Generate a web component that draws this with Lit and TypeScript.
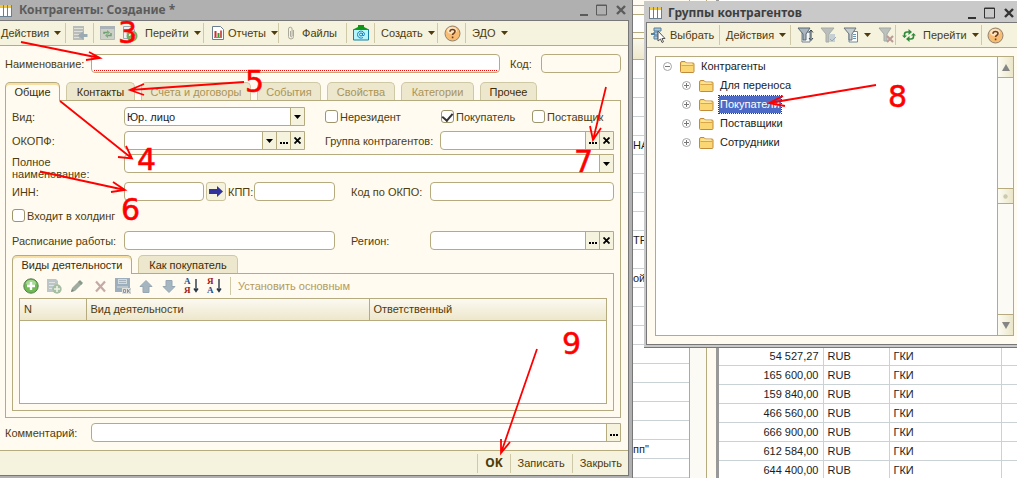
import { LitElement, html, svg, css, nothing, TemplateResult } from "lit";
import { customElement } from "lit/decorators.js";

const shared = css`
  * { box-sizing: border-box; }
  button, input, select {
    font: inherit;
    color: inherit;
    margin: 0;
    padding: 0;
    border: 0;
    background: none;
    border-radius: 0;
    outline: 0;
    appearance: none;
  }
  svg { display: block; flex: none; }
  .titlebar { display: flex; align-items: center; font: bold 12px/16px "Noto Sans", sans-serif; }
  .titlebar .caption { flex: 1; white-space: nowrap; }
  .titlebar .controls { display: flex; gap: 5px; }
  .toolbar {
    display: grid;
    height: 25px;
    background: #f5f2dd;
    border-bottom: 1px solid #b5ab7e;
    color: #4f3b0c;
    align-items: center;
  }
  .group { display: flex; align-items: center; height: 20px; position: relative; white-space: nowrap; }
  .sep { border-left: 1px solid #cfc9a8; padding-left: 6px; }
  .group button { display: flex; align-items: center; gap: 4px; height: 20px; white-space: nowrap; }
`;

const caret = html`<svg width="9" height="6" viewBox="0 0 9 6"><path d="M1 1h7l-3.500 4z" fill="#4f3b0c" /></svg>`;

const icons: Record<string, TemplateResult> = {
  grid: html`<svg width="13" height="13" viewBox="0 0 13 13"><path d="M0 1h13v11H0z" fill="#fff" /><path d="M0 1h13v3H0z" fill="#f0c63c" /><path d="M.5 1v11.500M4.500 1v11.500M8.500 1v11.500M12.500 1v11.500M0 12.500h13" stroke="#6a7f92" fill="none" /></svg>`,
  listBack: html`<svg width="16" height="16" viewBox="0 0 16 16"><path d="M1 1h11v14H1z" fill="#b9bdba" /><path d="M2 3.500h9M2 6.500h9M2 9.500h5M2 12.500h5" stroke="#dfe0d8" /><path d="M15.500 9h-4V6L6 10.500l5.500 4.500v-3h4z" fill="#9ba9b3" /></svg>`,
  refreshBox: html`<svg width="15" height="14" viewBox="0 0 15 14"><path d="M.5 .5h14v13H.5z" fill="#ccd0c5" stroke="#b4bab4" /><path d="M0 0h15v3H0z" fill="#a9b3b7" /><path d="M4 8V6.500h4M11 7v2.500H7" fill="none" stroke="#6da174" stroke-width="1.500" /><path d="M7 4l3 2.500L7 9zM8 7l-3 2.500L8 12z" fill="#7dab80" /></svg>`,
  docRefresh: html`<svg width="16" height="17" viewBox="0 0 16 17"><path d="M1.500 1.500h8l3 3v9h-11z" fill="#eff2f4" stroke="#9aa9b5" /><path d="M4 5h5M4 8h4" stroke="#a7b6c2" /><circle cx="10" cy="11" r="5.500" fill="#72ae61" /><path d="M7.500 11a2.500 2.500 0 0 1 4-2M12.500 11a2.500 2.500 0 0 1-4 2" fill="none" stroke="#e8f6df" stroke-width="1.500" /></svg>`,
  report: html`<svg width="12" height="14" viewBox="0 0 12 14"><path d="M.5 .5h8l3 3v10H.5z" fill="#fff" stroke="#697d92" /><path d="M3.500 5v6" stroke="#d42a2a" stroke-width="2" /><path d="M6.500 7v4" stroke="#2aa02a" stroke-width="2" /><path d="M9 4.500V11" stroke="#c62323" stroke-width="1.500" /><path d="M2 11.500h8" stroke="#888" /></svg>`,
  clip: html`<svg width="8" height="14" viewBox="0 0 8 14"><path d="M6.500 4v6.500a2.500 2.500 0 0 1-5 0V3a1.800 1.800 0 0 1 3.600 0v7a.8.8 0 0 1-1.600 0V5" fill="none" stroke="#aaa99b" /></svg>`,
  mail: html`<svg width="16" height="16" viewBox="0 0 16 16"><path d="M.5 4.500h15v10.500H.5z" fill="#b5f6fb" stroke="#1680a0" /><path d="M0 4.500L5 2V0h6v2l5 2.500z" fill="#119718" /><circle cx="8" cy="9.500" r="1.500" fill="none" stroke="#1d7fc0" /><path d="M9.500 8v2.500q2 .5 2-1a3.500 3.500 0 1 0-1.500 3" fill="none" stroke="#1d7fc0" /></svg>`,
  help: html`<svg width="17" height="17" viewBox="0 0 17 17"><circle cx="8.500" cy="8.500" r="7.500" fill="#f8bd73" stroke="#8f8271" /><ellipse cx="8" cy="5.500" rx="5" ry="3.500" fill="#fde5c2" /><path d="M6 6.700q0-2.200 2.500-2.200t2.500 2q0 1.200-1.500 2-.9.500-.9 1.500M8.600 11.500v1.700" fill="none" stroke="#6e3d1c" stroke-width="1.600" /></svg>`,
  add: html`<svg width="16" height="16" viewBox="0 0 16 16"><circle cx="8" cy="8" r="7.200" fill="#6fba54" stroke="#557f4c" /><ellipse cx="8" cy="5" rx="5" ry="3" fill="#a8d895" /><path d="M8 4v8M4 8h8" stroke="#fff" stroke-width="2.400" /></svg>`,
  copy: html`<svg width="16" height="16" viewBox="0 0 16 16"><path d="M1 1h9l2 2v11H1z" fill="#bcc5c7" /><path d="M3 4.500h6M3 7.500h6M3 10.500h3" stroke="#e2e5df" /><circle cx="11" cy="11" r="4.700" fill="#a7bfa1" /><path d="M11 8v6M8 11h6" stroke="#edf2e6" stroke-width="1.600" /></svg>`,
  pencil: html`<svg width="14" height="14" viewBox="0 0 14 14"><path d="M1 13l1-4 7-7 3 3-7 7z" fill="#a0aca0" /><path d="M8 3l2-2 3 3-2 2z" fill="#869a8d" /><path d="M1 13l1-3 2 2z" fill="#75847c" /></svg>`,
  remove: html`<svg width="13" height="13" viewBox="0 0 13 13"><path d="M2 1.500l9 10M11 1.500l-9 10" stroke="#c3aaa5" stroke-width="2.200" /></svg>`,
  save: html`<svg width="16" height="16" viewBox="0 0 16 16"><path d="M0 0h15v14H0z" fill="#9daebc" /><path d="M3 1h9v5H3z" fill="#d3dadb" /><path d="M4 2.500h7M4 4.500h7" stroke="#a5b2bb" /><path d="M2 8h11v2H2z" fill="#bcc7cd" /><path d="M7 10h9v6H7z" fill="#e0e2db" /><path d="M8.500 11.500h2v3h-2zM12.500 11v4M15.500 11l-2.500 2 2.500 2" fill="none" stroke="#8797a4" /></svg>`,
  up: html`<svg width="14" height="13" viewBox="0 0 14 13"><path d="M7 .5l6 6H10v6H4v-6H1z" fill="#a5b6c1" stroke="#96a7b3" /></svg>`,
  down: html`<svg width="14" height="13" viewBox="0 0 14 13"><path d="M7 12.500l6-6H10v-6H4v6H1z" fill="#a5b6c1" stroke="#96a7b3" /></svg>`,
  arrow: html`<svg width="14" height="11" viewBox="0 0 14 11"><path d="M0 3h8V0l6 5.500L8 11V8H0z" fill="#32329c" /></svg>`,
  pick: html`<svg width="15" height="16" viewBox="0 0 15 16"><path d="M3 1h7v3H3zM3 5h4v3H3zM3 9h4v3H3z" fill="#a9c7dc" stroke="#587e9b" /><path d="M0 6h4v2H0z" fill="#4d81a8" /><path d="M7 4v10l2.500-2 1.500 3.500 1.500-.7-1.500-3.300h3z" fill="#fff" stroke="#555" /></svg>`,
  filterSort: html`<svg width="17" height="16" viewBox="0 0 17 16"><path d="M5 5h8v10H5z" fill="#f4f7f8" stroke="#758390" /><path d="M1 1h12l-4 6v6H6V7z" fill="#a9b6bf" stroke="#5b6872" /><path d="M14 3v9M12 5.500L14 3l2 2.500M12 11l2 2.500 2-2.500" fill="none" stroke="#33414e" /></svg>`,
  filterEdit: html`<svg width="17" height="16" viewBox="0 0 17 16"><path d="M1 1h13l-5 6v8H6V7z" fill="#babfbb" stroke="#a5aca9" /><path d="M10 7h5v8h-5z" fill="#c6cfd1" /><path d="M10 12l2 2 4-4" stroke="#96a9b5" fill="none" /></svg>`,
  filterDoc: html`<svg width="16" height="16" viewBox="0 0 16 16"><path d="M6 4.500h8.500v10.500H6z" fill="#fff" stroke="#72889c" /><path d="M10 7.500h3M10 9.500h3M10 11.500h3" stroke="#6793b6" /><path d="M1 1h12l-4 6v6H6V7z" fill="#c4ccce" stroke="#69757c" /></svg>`,
  filterOff: html`<svg width="17" height="16" viewBox="0 0 17 16"><path d="M1 1h12l-4 6v7H6V7z" fill="#bcc1bd" stroke="#a3a9a5" /><path d="M9 9l6 6M15 9l-6 6" stroke="#bd9995" stroke-width="2" /></svg>`,
  refresh: html`<svg width="14" height="13" viewBox="0 0 14 13"><path d="M2.500 7V5.500q0-2.500 2.500-2.500h2M11.500 6v1.500q0 2.500-2.500 2.500H7" fill="none" stroke="#2f8a3c" stroke-width="1.600" /><path d="M6.500 0l3.500 3-3.500 3zM7.500 7L4 10l3.500 3z" fill="#2f8a3c" /><path d="M0 6.500h5L2.500 9zM9 6.500h5L11.500 4z" fill="#2f8a3c" /></svg>`,
  folder: html`<svg width="15" height="13" viewBox="0 0 15 13"><path d="M.5 3q0-1.500 1.500-1.500h3L6.500 3H13q1 0 1 1v7.500q0 1-1 1H1.500q-1 0-1-1z" fill="#fbd774" stroke="#c08b3c" /><path d="M1.500 5.500h12" stroke="#d9a648" /><path d="M2 4h10" stroke="#fff0b5" /></svg>`,
  plus: html`<svg width="9" height="9" viewBox="0 0 9 9"><circle cx="4.500" cy="4.500" r="4" fill="#fff" stroke="#a4a4a4" /><path d="M2 4.500h5M4.500 2v5" stroke="#777" /></svg>`,
  minus: html`<svg width="9" height="9" viewBox="0 0 9 9"><circle cx="4.500" cy="4.500" r="4" fill="#fff" stroke="#a4a4a4" /><path d="M2 4.500h5" stroke="#777" /></svg>`,
  dropdown: html`<svg width="7" height="4" viewBox="0 0 7 4"><path d="M0 0h7L3.500 4z" fill="#000" /></svg>`,
  dots: html`<svg width="8" height="2" viewBox="0 0 8 2"><path d="M0 0h2v2H0zM3 0h2v2H3zM6 0h2v2H6z" fill="#000" /></svg>`,
  cross: html`<svg width="7" height="7" viewBox="0 0 7 7"><path d="M.5 .5l6 6M6.500 .5l-6 6" stroke="#000" stroke-width="1.800" /></svg>`,
};

const windowControls = (color: string) => html`
  <div class="controls">
    <button aria-label="Свернуть"><svg width="13" height="12" viewBox="0 0 13 12"><path d="M3 11h8" stroke=${color} stroke-width="2" /></svg></button>
    <button aria-label="Развернуть"><svg width="13" height="12" viewBox="0 0 13 12"><path d="M1.500 1h10v10h-10zM1 1.500h11" fill="none" stroke=${color} /></svg></button>
    <button aria-label="Закрыть"><svg width="16" height="12" viewBox="0 0 16 12"><path d="M4 2l8 8M12 2l-8 8" stroke=${color} stroke-width="2.400" /></svg></button>
  </div>`;

const tool = (icon: string, label: string) => html`<button aria-label=${label}>${icons[icon]}</button>`;

const combo = (id: string, ...parts: string[]) => html`
  <div class="combo ${parts.length ? "with-buttons" : ""}">
    <input id=${id} />
    ${parts.map((k) => html`<button class=${k} aria-label=${k === "cross" ? "Очистить" : "Выбрать"}>${icons[k]}</button>`)}
  </div>`;

@customElement("contractor-window")
class ContractorWindow extends LitElement {
  static styles = [shared, css`
    :host { display: flex; flex-direction: column; background: #b0b0b0; border-right: 1px solid #777; padding: 0 3px 2px 0; }
    .titlebar { height: 20px; color: #5b5b5b; gap: 7px; }
    .titlebar > svg { margin-left: -1px; }
    .frame { flex: 1; display: flex; flex-direction: column; border: 1px solid #777; border-left: 0; background: #fffbf0; color: #4f3b0c; min-height: 0; }
    .toolbar { grid-template-columns: 65px 28px 110px 75px 68px 28px 63px 28px 1fr; }
    .first { padding-left: 1px; }
    .go { margin-left: 7px; }
    .reports { padding-left: 8px; }
    .pair { display: flex; gap: 7px; }
    .body { flex: 1; display: flex; flex-direction: column; padding: 8px 7px 8px 5px; min-height: 0; }
    .line { display: flex; align-items: center; }
    .head-label { width: 86px; }
    .name { flex: 1; min-width: 0; height: 19px; border: 1px solid #b5ab7e; border-radius: 4px; background: #fff; padding: 0 2px 1px; display: flex; }
    .name input { flex: 1; min-width: 0; border-bottom: 1px dotted #f00; }
    .code-label { margin: 0 0 0 10px; width: 31px; }
    .code { width: 80px; height: 19px; border: 1px solid #b5ab7e; border-radius: 4px; background: #fffbf0; }
    .combo { display: flex; height: 19px; min-width: 0; border: 1px solid #b5ab7e; border-radius: 4px; background: #fff; overflow: hidden; }
    .combo.with-buttons { border-radius: 4px 0 0 4px; }
    .combo input { flex: 1; min-width: 0; width: 0; padding: 0 3px; }
    .combo button { width: 14px; flex: none; display: flex; align-items: center; justify-content: center; background: #f5f2dd; border-left: 1px solid #b5ab7e; }
    .combo .dots svg { margin-top: 5px; }
    .tabs { display: flex; gap: 6px; margin-bottom: -1px; position: relative; }
    .main-tabs { margin-top: 9px; }
    .tab { height: 18px; line-height: 17px; padding: 1px 0 0; text-align: center; border: 1px solid #cfc8a5; border-bottom: 0; border-radius: 5px 5px 0 0; background: #ece7cd; color: #3d2c05; white-space: nowrap; }
    .tab[disabled] { color: #ab9456; }
    .tab[aria-selected="true"] { height: 19px; background: #fffbf0; border-color: #b5ab7e; box-shadow: inset 0 2px 0 #f8dfa3; }
    .w55 { width: 55px; } .w69 { width: 69px; } .w110 { width: 110px; } .w65 { width: 64px; } .w68 { width: 68px; } .w73 { width: 73px; } .w57 { width: 57px; }
    .w120 { width: 120px; } .w100 { width: 100px; }
    .panel { flex: 1; display: flex; flex-direction: column; border: 1px solid #b5ab7e; padding: 6px 6px; min-height: 0; }
    .row { display: grid; grid-template-columns: 112px 211px 1fr; align-items: center; min-height: 19px; }
    .row.narrow { grid-template-columns: 112px 181px 1fr; }
    .row.full { grid-template-columns: 112px 1fr; line-height: 12px; height: 28px; align-items: start; }
    .r2 { margin-top: 5px; }
    .r3 { margin-top: 4px; }
    .r6 { margin-top: 7px; }
    .row.full label { padding-top: 2px; }
    .select { display: flex; position: relative; height: 19px; border: 1px solid #b5ab7e; border-radius: 4px 0 0 4px; background: #fff; overflow: hidden; }
    .select select { flex: 1; padding: 0 2px; color: #222; }
    .select span { width: 14px; display: flex; align-items: center; justify-content: center; background: #f5f2dd; border-left: 1px solid #b5ab7e; }
    .checks { display: grid; grid-template-columns: 116px 91px 1fr; padding-left: 20px; }
    .check { display: flex; align-items: center; gap: 2px; white-space: nowrap; }
    .check input { width: 13px; height: 13px; border: 1px solid #9d956d; border-radius: 3px; background: #fff; flex: none; }
    .check input:checked { display: grid; place-items: start center; }
    .check input:checked::after { content: ""; width: 5px; height: 8px; border: solid #333; border-width: 0 2px 2px 0; transform: rotate(40deg); }
    .right { display: grid; grid-template-columns: 79px 1fr; padding-left: 16px; align-items: center; }
    .right.group-field { grid-template-columns: 115px 1fr; padding-left: 20px; white-space: nowrap; }
    .inn { display: grid; grid-template-columns: 80px 20px 24px 1fr; column-gap: 2px; align-items: center; }
    .inn > button { height: 19px; display: flex; align-items: center; justify-content: center; border: 1px solid #c9c29c; border-radius: 3px; background: #f5f2dd; }
    .holding { margin-top: 6px; height: 17px; }
    .sub-tabs { margin-top: 5px; }
    .sub { flex: 1; display: flex; flex-direction: column; border: 1px solid #b5ab7e; padding: 4px 6px 6px; min-height: 0; }
    .commands { display: flex; gap: 7px; height: 16px; align-items: center; padding-left: 4px; margin-bottom: 4px; }
    .commands button { width: 16px; height: 18px; display: flex; align-items: center; justify-content: center; white-space: nowrap; }
    .commands .sort { color: #234f8f; font: bold 9px/9px "Liberation Serif", serif; justify-content: flex-start; gap: 2px; }
    .sort .letters { display: flex; flex-direction: column; }
    .sort .ya { color: #a01616; }
    .commands .set { width: auto; border-left: 1px solid #cfc9a8; padding-left: 7px; color: #b39a5a; }
    .holder { flex: 1; border: 1px solid #b5ab7e; background: #fff; min-height: 0; }
    table { width: 100%; border-collapse: collapse; table-layout: fixed; }
    th { height: 21px; padding: 0 4px; text-align: left; font-weight: normal; background: linear-gradient(#fbf9f1, #ede7cb); border-bottom: 1px solid #b5ab7e; }
    th + th { border-left: 1px solid #b5ab7e; }
    .c1 { width: 66px; } .c3 { width: 237px; }
    .comment { margin-top: 5px; }
    .comment .combo { flex: 1; }
    .footer { display: flex; justify-content: flex-end; height: 25px; padding-right: 6px; background: #f5f2dd; border-top: 1px solid #b5ab7e; align-items: center; }
    .footer button { height: 19px; padding: 0 7px; border-left: 1px solid #cfc9a8; }
    .footer button:last-child { padding-right: 0; }
    .footer .ok { font: bold 12px/16px "Noto Sans", sans-serif; }
  `];
  render() {
    const tab = (label: string, cls: string, on = false, off = false) =>
      html`<button class="tab ${cls}" role="tab" aria-selected=${on} ?disabled=${off}>${label}</button>`;
    const sortArrow = html`<svg width="6" height="14" viewBox="0 0 6 14"><path d="M3 0v12M1 9.500l2 3 2-3" fill="none" stroke="#2b3848" stroke-width="1.400" /></svg>`;
    return html`
      <div class="titlebar">${icons.grid}<span class="caption">Контрагенты: Создание *</span>${windowControls("#5b5b5b")}</div>
      <div class="frame">
        <div class="toolbar">
          <div class="group first"><button>Действия ${caret}</button></div>
          <div class="group sep">${tool("listBack", "Записать и закрыть")}</div>
          <div class="group sep"><span class="pair">${tool("refreshBox", "Перечитать")}${tool("docRefresh", "Обновить")}</span><button class="go">Перейти ${caret}</button></div>
          <div class="group sep reports"><button>${icons.report}Отчеты ${caret}</button></div>
          <div class="group sep reports"><button>${icons.clip}&nbsp;Файлы</button></div>
          <div class="group sep">${tool("mail", "Почта")}</div>
          <div class="group sep"><button>Создать ${caret}</button></div>
          <div class="group sep">${tool("help", "Справка")}</div>
          <div class="group sep"><button>ЭДО ${caret}</button></div>
        </div>
        <div class="body">
          <div class="line">
            <label class="head-label" for="name">Наименование:</label>
            <div class="name"><input id="name" /></div>
            <label class="code-label" for="code">Код:</label><input class="code" id="code" />
          </div>
          <div class="tabs main-tabs" role="tablist">
            ${tab("Общие", "w55", true)}${tab("Контакты", "w69")}${tab("Счета и договоры", "w110", false, true)}${tab("События", "w65", false, true)}${tab("Свойства", "w68", false, true)}${tab("Категории", "w73", false, true)}${tab("Прочее", "w57")}
          </div>
          <div class="panel">
            <div class="row narrow">
              <label for="kind">Вид:</label>
              <div class="select"><select id="kind"><option>Юр. лицо</option></select><span>${icons.dropdown}</span></div>
              <div class="checks">
                <label class="check"><input type="checkbox" />Нерезидент</label>
                <label class="check"><input type="checkbox" checked />Покупатель</label>
                <label class="check"><input type="checkbox" />Поставщик</label>
              </div>
            </div>
            <div class="row narrow r2">
              <label for="okopf">ОКОПФ:</label>${combo("okopf", "dropdown", "dots", "cross")}
              <div class="right group-field"><label for="group">Группа контрагентов:</label>${combo("group", "dots", "cross")}</div>
            </div>
            <div class="row full r3"><label for="full-name">Полное<br />наименование:</label>${combo("full-name", "dropdown")}</div>
            <div class="row">
              <label for="inn">ИНН:</label>
              <div class="inn">${combo("inn")}<button aria-label="Проверить ИНН">${icons.arrow}</button><label for="kpp">КПП:</label>${combo("kpp")}</div>
              <div class="right"><label for="okpo">Код по ОКПО:</label>${combo("okpo")}</div>
            </div>
            <label class="check holding"><input type="checkbox" />Входит в холдинг</label>
            <div class="row r6">
              <label for="hours">Расписание работы:</label>${combo("hours")}
              <div class="right"><label for="region">Регион:</label>${combo("region", "dots", "cross")}</div>
            </div>
            <div class="tabs sub-tabs" role="tablist">${tab("Виды деятельности", "w120", true)}${tab("Как покупатель", "w100")}</div>
            <div class="sub">
              <div class="commands">
                ${tool("add", "Добавить")}${tool("copy", "Скопировать")}${tool("pencil", "Изменить")}${tool("remove", "Удалить")}${tool("save", "Завершить редактирование")}${tool("up", "Вверх")}${tool("down", "Вниз")}
                <button class="sort" aria-label="По возрастанию"><span class="letters"><span>А</span><span class="ya">Я</span></span>${sortArrow}</button>
                <button class="sort" aria-label="По убыванию"><span class="letters"><span class="ya">Я</span><span>А</span></span>${sortArrow}</button>
                <button class="set" disabled>Установить основным</button>
              </div>
              <div class="holder"><table><thead><tr><th class="c1">N</th><th>Вид деятельности</th><th class="c3">Ответственный</th></tr></thead></table></div>
            </div>
          </div>
          <div class="line comment"><label class="head-label" for="comment">Комментарий:</label>${combo("comment", "dots")}</div>
        </div>
        <div class="footer"><button class="ok">OK</button><button>Записать</button><button>Закрыть</button></div>
      </div>`;
  }
}

@customElement("groups-window")
class GroupsWindow extends LitElement {
  static styles = [shared, css`
    :host { display: block; background: #c9c9c9; padding: 0 0 2px 2px; border-bottom: 1px solid #777; }
    .titlebar { height: 21px; color: #3e3e3e; gap: 6px; padding: 2px 0 0 3px; }
    .frame { border: 1px solid #777; border-width: 1px 0 1px 1px; background: #fffbf0; }
    .toolbar { grid-template-columns: 72px 71px 105px 86px 1fr; }
    .first { padding-left: 4px; }
    .filters { display: flex; gap: 6px; }
    .help { padding-left: 5px; }
    .body { padding: 8px 3px 8px 8px; }
    .box { display: flex; height: 280px; border: 1px solid #b5ab7e; background: #fff; color: #1c1c1c; }
    ul { list-style: none; margin: 0; padding: 0; }
    .tree { flex: 1; padding-left: 7px; }
    .tree ul { padding-left: 19px; }
    .node { display: flex; align-items: center; height: 19px; gap: 5px; }
    .node svg + svg { margin-left: 3px; }
    .node span { padding: 1px 1px; line-height: 15px; }
    .node .chosen { background: #4c6ac6; color: #fff; outline: 1px dotted #24388a; }
    .scroll { width: 16px; border-left: 1px solid #b5ab7e; background: #fbfaf5; display: flex; flex-direction: column; align-items: stretch; }
    .scroll button { height: 21px; display: flex; align-items: center; justify-content: center; background: linear-gradient(90deg, #fcfbf3, #ebe6c8); border-bottom: 1px solid #b5ab7e; }
    .scroll button:last-child { border-top: 1px solid #b5ab7e; border-bottom: 0; }
    .track { flex: 1; display: grid; grid-template-rows: 1fr 16px 1fr; }
    .thumb { border: 1px solid #b5ab7e; border-width: 1px 0; background: linear-gradient(90deg, #fcfbf3, #ebe6c8); display: grid; place-items: center; }
  `];
  render() {
    const node = (label: string, mark = "plus", chosen = false) =>
      html`<div class="node">${icons[mark]}${icons.folder}<span class=${chosen ? "chosen" : nothing}>${label}</span></div>`;
    return html`
      <div class="titlebar">${icons.grid}<span class="caption">Группы контрагентов</span>${windowControls("#333")}</div>
      <div class="frame">
        <div class="toolbar">
          <div class="group first"><button>${icons.pick}Выбрать</button></div>
          <div class="group sep"><button>Действия ${caret}</button></div>
          <div class="group sep"><span class="filters">${tool("filterSort", "Отбор и сортировка")}${tool("filterEdit", "Отбор по значению")}<button aria-label="История отборов">${icons.filterDoc}${caret}</button>${tool("filterOff", "Отключить отбор")}</span></div>
          <div class="group sep"><button>${icons.refresh}&nbsp;Перейти ${caret}</button></div>
          <div class="group sep help">${tool("help", "Справка")}</div>
        </div>
        <div class="body"><div class="box">
          <ul class="tree">
            <li>${node("Контрагенты", "minus")}
              <ul><li>${node("Для переноса")}</li><li>${node("Покупатели", "plus", true)}</li><li>${node("Поставщики")}</li><li>${node("Сотрудники")}</li></ul>
            </li>
          </ul>
          <div class="scroll">
            <button aria-label="Прокрутить вверх"><svg width="8" height="7" viewBox="0 0 8 7"><path d="M4 0l4 7H0z" fill="#858585" /></svg></button>
            <div class="track"><i></i><div class="thumb"><svg width="5" height="5" viewBox="0 0 5 5"><circle cx="2.500" cy="2.500" r="2.200" fill="#cdc9af" /></svg></div></div>
            <button aria-label="Прокрутить вниз"><svg width="8" height="7" viewBox="0 0 8 7"><path d="M4 7l4-7H0z" fill="#858585" /></svg></button>
          </div>
        </div></div>
      </div>`;
  }
}

const marks = [
  { n: "3", x: 118, y: 43, line: "M21 42L100 58M89 52L100 58L86 60" },
  { n: "5", x: 245, y: 92, line: "M244 82L130 90M144 84L130 90L144 95" },
  { n: "4", x: 137, y: 170, line: "M60 101L132 158.500M126 146L132 158.500L118 157" },
  { n: "6", x: 121, y: 220, line: "M40 171.500L125 190M113 182L125 190L111 192" },
  { n: "7", x: 574, y: 172, line: "M606 87L593 140M590 126L593 140L601 128" },
  { n: "8", x: 888, y: 107, line: "M876 85L769 103M783 96L769 103L785 106" },
  { n: "9", x: 562, y: 354, line: "M537 349L501 453M501 439L501 453L510 442" },
];

@customElement("app-root")
class AppRoot extends LitElement {
  static styles = [shared, css`
    :host { display: block; position: relative; height: 100vh; overflow: hidden; background: #fff; font: 11px/14px "Liberation Sans", Arial, sans-serif; color: #1c1c1c; }
    .desktop { display: grid; grid-template-columns: minmax(0, 1fr) 57px 17px 9px 301px; height: 100%; }
    contractor-window { height: 100vh; min-width: 0; }
    .sheet { border-right: 1px solid #b5ab7e; overflow: hidden; background: #fff; }
    .strip { height: 60px; background: linear-gradient(#fffbf0 5px, #b5ab7e 5px 6px, #fffbf0 6px 14px, #b5ab7e 14px 15px, #fff 15px 32px, #b5ab7e 32px 33px, #fffbf0 33px 38px, #b5ab7e 38px 39px, #f9f7ec 39px, #ede7cb 59px, #b5ab7e 59px); }
    .cell { height: 19px; border-bottom: 1px solid #cad2d6; line-height: 19px; white-space: nowrap; }
    .gutter { background: #fbfaf5; border-right: 1px solid #b5ab7e; }
    .edge { background: #fffbf0; }
    .sums { display: flex; flex-direction: column; justify-content: flex-end; border-left: 3px solid #999; margin-bottom: -2px; min-width: 0; }
    .sums table { border-collapse: collapse; table-layout: fixed; width: 100%; }
    td { height: 19px; padding: 0 4px; border-bottom: 1px solid #cad2d6; border-right: 1px solid #cad2d6; }
    td:last-child { border-right: 0; }
    .sum { width: 104px; text-align: right; } .cur { width: 66px; } .org { width: 112px; }
    groups-window { position: absolute; top: 1px; left: calc(100% - 373px); right: 0; }
    .marks { position: absolute; top: 0; left: 0; pointer-events: none; }
    .marks path { fill: none; stroke: #f00; stroke-width: 1.800; }
    .marks text { font: 30px "DejaVu Sans", sans-serif; fill: #f00; stroke: #f00; stroke-width: 0.500; }
  `];
  render() {
    const texts: Record<number, string> = { 4: "НА", 9: "ТР", 11: "ой", 20: 'пп"' };
    const sums = ["54 527,27", "165 600,00", "159 840,00", "466 560,00", "666 900,00", "612 584,00", "644 400,00"];
    return html`
      <div class="desktop">
        <contractor-window></contractor-window>
        <div class="sheet"><div class="strip"></div>${Array.from({ length: 22 }, (_, i) => html`<div class="cell">${texts[i] ?? nothing}</div>`)}</div>
        <div class="gutter"></div>
        <div class="edge"></div>
        <div class="sums"><table><tbody>${sums.map((s) => html`<tr><td class="sum">${s}</td><td class="cur">RUB</td><td class="org">ГКИ</td><td></td></tr>`)}</tbody></table></div>
      </div>
      <groups-window></groups-window>
      <svg class="marks" width="1017" height="478" viewBox="0 0 1017 478">
        ${marks.map((m) => svg`<path d=${m.line} /><text x=${m.x} y=${m.y}>${m.n}</text>`)}
      </svg>`;
  }
}
